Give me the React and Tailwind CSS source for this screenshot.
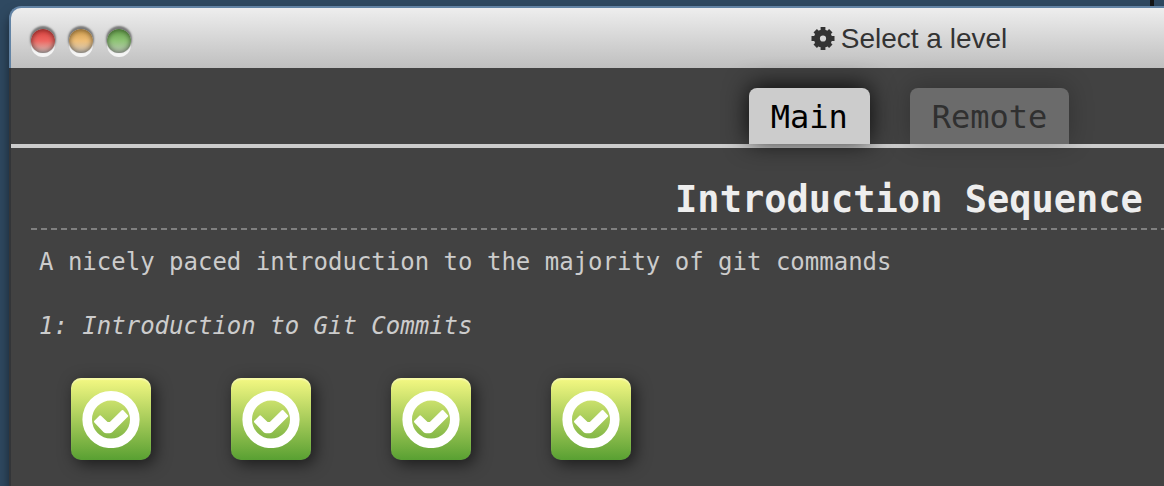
import React from "react";

const levels = [1, 2, 3, 4];

function GearIcon() {
  return (
    <svg viewBox="0 0 24 24" className="size-6 shrink-0" fill="none" stroke="currentColor" aria-hidden="true">
      <circle cx="12" cy="11.500" r="6.100" strokeWidth="6" />
      <path
        strokeWidth="4.800"
        d="M12 0v5M12 18v5M.5 11.500h5M18.500 11.500h5M4.200 3.700l3.100 3.100M16.700 16.200l3.100 3.100M19.800 3.700l-3.100 3.100M7.300 16.200l-3.100 3.100"
      />
    </svg>
  );
}

function SolvedIcon() {
  return (
    <svg viewBox="0 0 58 58" className="size-[58px]" fill="none" stroke="#fff" aria-hidden="true">
      <circle cx="29" cy="29.500" r="23.8" strokeWidth="9.6" />
      <path
        fill="#fff"
        strokeWidth="2.400"
        strokeLinejoin="round"
        d="M13.200 31.600L18.200 26.600L25 33.200h3.400L40.600 21.200L45 26L29.400 41.400Q28.600 42.100 27.500 42.100H24.300Q23.300 42.100 22.500 41.300z"
      />
    </svg>
  );
}

function WindowButton({ label, color }) {
  return (
    <button
      type="button"
      aria-label={label}
      className={`size-6 rounded-full shadow-[0_-2px_2px_1px_#777,0_4px_0_0_#f5f5f5,inset_0_0_5px_1px_rgba(0,0,0,0.45)] ${color}`}
    />
  );
}

export default function App() {
  return (
    <div className="flex min-h-screen flex-col overflow-hidden bg-[#2f4961]">
      <div className="flex h-1.5 justify-end pr-2.5">
        <div className="w-1 bg-[#151515]" />
      </div>
      <div className="-mr-[643px] ml-[9px] flex grow flex-col rounded-t-xl shadow-[0_8px_12px_rgba(0,0,0,0.5)]">
        <header className="flex h-[62px] items-center rounded-t-xl border-t-2 border-l-2 border-[#6283a4] bg-linear-to-b from-[#eeeeee] to-[#bfbfbf] px-5">
          <div className="flex flex-1 gap-3.5 pt-1.5">
            <WindowButton label="Close" color="bg-linear-to-b from-[#dc4743] from-10% via-[#ee6762] via-50% to-[#c9bcbb]" />
            <WindowButton label="Minimize" color="bg-linear-to-b from-[#d4a254] from-10% via-[#efbf78] via-50% to-[#c8c2b8]" />
            <WindowButton label="Zoom" color="bg-linear-to-b from-[#6ba551] from-10% via-[#8fc476] via-50% to-[#bbc6b6]" />
          </div>
          <h1 className="flex items-center gap-1.5 pt-0.5 font-['Liberation_Sans',sans-serif] text-[28px] text-[#333333]">
            <GearIcon />
            Select a level
          </h1>
          <div className="flex-1" />
        </header>

        <main className="grow border-l-2 border-[#333538] bg-[#424242] pt-5 pb-6 font-['DejaVu_Sans_Mono',monospace] text-2xl text-[#cccccc]">
          <nav className="flex justify-center gap-10 border-b-4 border-[#cccccc]">
            <button type="button" className="h-14 rounded-t-lg bg-[#cccccc] px-[22px] pt-0.5 text-[32px] text-black shadow-[0_-2px_24px_rgba(0,0,0,0.85)]">
              Main
            </button>
            <button type="button" className="h-14 rounded-t-lg bg-[#6b6b6b] px-[22px] pt-0.5 text-[32px] text-[#303030] shadow-[0_-2px_24px_rgba(0,0,0,0.25)]">
              Remote
            </button>
          </nav>

          <section className="px-5 pt-6">
            <h2 className="pt-0.5 text-center text-[37px] leading-[52px] font-bold text-[#eeeeee]">Introduction Sequence</h2>
            <div className="mt-0.5 h-0.5 bg-[repeating-linear-gradient(90deg,#808080_0_6px,transparent_6px_10px)]" />
            <div className="px-2 pt-4">
              <p className="leading-8">A nicely paced introduction to the majority of git commands</p>
              <p className="mt-8 leading-8 italic">1: Introduction to Git Commits</p>
            </div>
            <div className="mt-9 flex gap-20 px-10">
              {levels.map((level) => (
                <button
                  key={level}
                  type="button"
                  aria-label={`Level ${level}, solved`}
                  className="flex h-[82px] w-20 items-center justify-center rounded-[10px] bg-linear-to-b from-[#f5f983] to-[#58a032] shadow-[4px_4px_16px_rgba(0,0,0,0.6),inset_0_2px_1px_rgba(255,255,255,0.3)]"
                >
                  <SolvedIcon />
                </button>
              ))}
            </div>
          </section>
        </main>
      </div>
    </div>
  );
}
